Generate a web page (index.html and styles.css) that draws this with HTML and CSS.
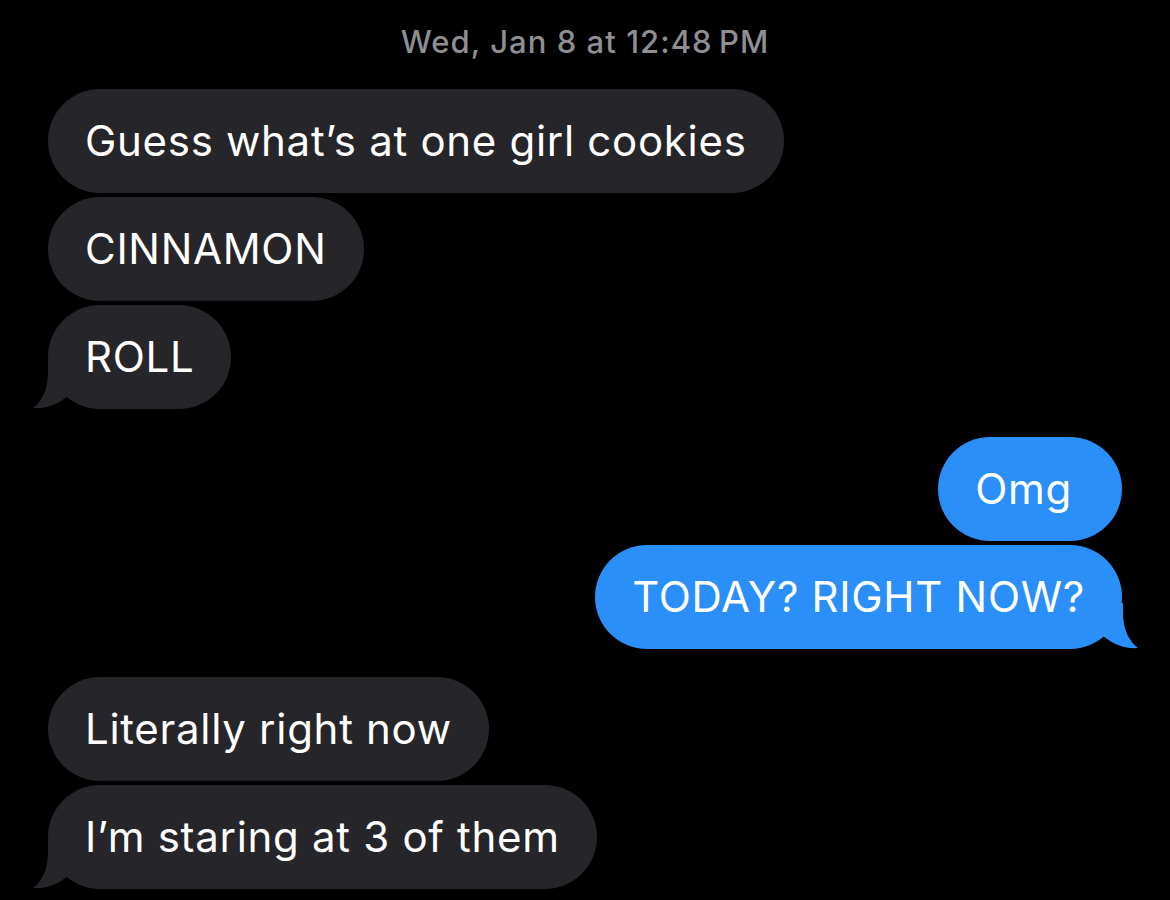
FILE: index.html
```html
<!DOCTYPE html>
<html lang="en">
<head>
<meta charset="utf-8">
<title>Messages</title>
<link rel="stylesheet" href="styles.css">
</head>
<body>
<div class="chat">
  <div class="stamp">Wed, Jan 8 at 12:48&#8239;PM</div>

  <div class="group in">
    <div class="bubble">Guess what’s at one girl cookies</div>
    <div class="bubble">CINNAMON</div>
    <div class="bubble tail">ROLL
      <svg class="tail-shape" viewBox="0 0 40 46" width="40" height="46" aria-hidden="true"><path d="M15 0 L15 9 C15 27 9 38 0 45 C12 46 24 42 35 33 L35 0 Z"/></svg>
    </div>
  </div>

  <div class="group out">
    <div class="bubble bubble-omg">Omg</div>
    <div class="bubble tail">TODAY? RIGHT NOW?
      <svg class="tail-shape" viewBox="0 0 40 46" width="40" height="46" aria-hidden="true"><path d="M25 0 L25 9 C25 27 31 38 40 45 C28 46 16 42 5 33 L5 0 Z"/></svg>
    </div>
  </div>

  <div class="group in">
    <div class="bubble">Literally right now</div>
    <div class="bubble tail">I’m staring at 3 of them
      <svg class="tail-shape" viewBox="0 0 40 46" width="40" height="46" aria-hidden="true"><path d="M15 0 L15 9 C15 27 9 38 0 45 C12 46 24 42 35 33 L35 0 Z"/></svg>
    </div>
  </div>
</div>
</body>
</html>
```

FILE: styles.css
```css
html, body {
  margin: 0;
  padding: 0;
  background: #000;
}

body {
  width: 1170px;
  height: 900px;
  overflow: hidden;
  font-family: Inter, "Noto Sans", "Liberation Sans", sans-serif;
  color: #fff;
}

.chat {
  display: flex;
  flex-direction: column;
  padding: 24px 48px 0 48px;
}

.stamp {
  text-align: center;
  color: #8e8e93;
  font-size: 31px;
  font-weight: 500;
  line-height: 36px;
  height: 36px;
  margin-bottom: 29px;
  letter-spacing: 1.05px;
}

.group {
  display: flex;
  flex-direction: column;
  gap: 4px;
  margin-bottom: 28px;
}

.group.in {
  align-items: flex-start;
}

.group.out {
  align-items: flex-end;
}

.bubble {
  position: relative;
  box-sizing: border-box;
  height: 104px;
  display: flex;
  align-items: center;
  padding: 0 37px;
  border-radius: 52px;
  font-size: 42px;
  line-height: 1;
  letter-spacing: 0.7px;
  white-space: nowrap;
}

.in .bubble {
  background: #262529;
}

.out .bubble {
  background: #2a8ff9;
}

.bubble-omg {
  padding-right: 50px;
}

.tail-shape {
  position: absolute;
  bottom: 0;
  display: block;
}

.in .tail-shape {
  left: -15px;
  fill: #262529;
}

.out .tail-shape {
  right: -16px;
  fill: #2a8ff9;
}
```
